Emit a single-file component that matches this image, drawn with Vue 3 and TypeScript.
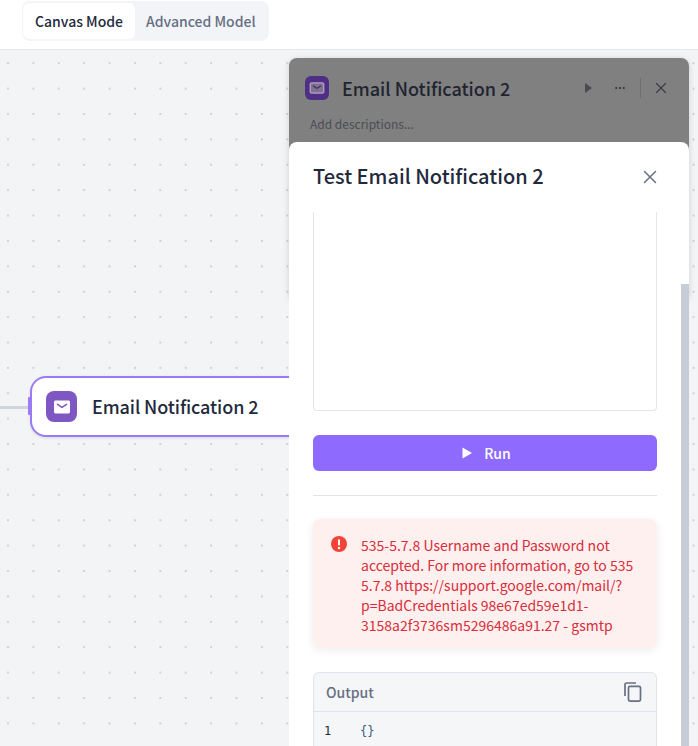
<script setup lang="ts">
const errorText = '535-5.7.8 Username and Password not accepted. For more information, go to 535 5.7.8 https://support.google.com/mail/?p=BadCredentials 98e67ed59e1d1-3158a2f3736sm5296486a91.27 - gsmtp'
</script>

<template>
  <div class="app">
    <header class="topbar">
      <div class="tabs">
        <button class="tab active">Canvas Mode</button>
        <button class="tab">Advanced Model</button>
      </div>
    </header>
    <main class="canvas">
      <div class="edge"></div>
      <div class="node">
        <span class="handle"></span>
        <span class="node-icon">
          <svg width="20" height="20" viewBox="0 0 20 20"><path fill="#fff" d="M3.6 3.6h12.8c.9 0 1.6.7 1.6 1.6v9.6c0 .9-.7 1.6-1.6 1.6H3.6c-.9 0-1.6-.7-1.6-1.6V5.200c0-.9.7-1.600 1.600-1.600z"/><path fill="none" stroke="#7e57c2" stroke-width="1.500" stroke-linecap="round" stroke-linejoin="round" d="M5.500 7.300 10 10.400l4.500-3.100"/></svg>
        </span>
        <span class="node-title">Email Notification 2</span>
      </div>

      <section class="panel">
        <div class="panel-head">
          <span class="panel-icon">
            <svg width="16" height="16" viewBox="0 0 20 20"><path fill="#807090" stroke="#c9bedd" stroke-width="1.200" d="M2.500 3.600h15c.6 0 1 .4 1 1v10.800c0 .6-.4 1-1 1h-15c-.6 0-1-.4-1-1V4.600c0-.6.4-1 1-1z"/><path fill="none" stroke="#3f2a66" stroke-width="1.500" stroke-linecap="round" d="M5.500 7.500 10 10.500l4.500-3"/></svg>
          </span>
          <span class="panel-title">Email Notification 2</span>
          <svg class="tool play" width="12" height="12" viewBox="0 0 12 12"><path fill="#4b4b4f" d="M3 1v10L10 6z"/></svg>
          <svg class="tool dots" width="14" height="14" viewBox="0 0 14 14"><g fill="#333438"><circle cx="3.200" cy="7" r="1.100"/><circle cx="7" cy="7" r="1.100"/><circle cx="10.800" cy="7" r="1.100"/></g></svg>
          <span class="sep"></span>
          <svg class="tool" width="12" height="12" viewBox="0 0 12 12"><path stroke="#3d3e42" stroke-width="1.200" stroke-linecap="round" d="M1.500 1.500l9 9m0-9l-9 9"/></svg>
        </div>
        <div class="panel-desc">Add descriptions...</div>
      </section>

      <section class="test">
        <div class="test-head">
          <h2>Test Email Notification 2</h2>
          <svg width="14" height="14" viewBox="0 0 14 14"><path stroke="#676f83" stroke-width="1.500" stroke-linecap="round" d="M1.500 1.500l11 11m0-11l-11 11"/></svg>
        </div>
        <div class="test-body">
          <div class="form-box"></div>
          <button class="run">
            <svg width="12" height="12" viewBox="0 0 12 12"><path fill="#fff" d="M1.500.5v11L11 6z"/></svg>
            <span>Run</span>
          </button>
          <div class="rule"></div>
          <div class="error">
            <svg class="err-icon" width="18" height="18" viewBox="0 0 18 18"><circle cx="9" cy="9" r="8" fill="#f04438"/><rect x="8" y="4.200" width="2" height="6.400" rx="1" fill="#fff"/><circle cx="9" cy="13" r="1.200" fill="#fff"/></svg>
            <p>{{ errorText }}</p>
          </div>
          <div class="output">
            <div class="output-head">
              <span>Output</span>
              <svg width="18" height="20" viewBox="0 0 18 20" fill="none" stroke="#676f83" stroke-width="1.700"><path d="M1 14V2.500C1 1.700 1.700 1 2.500 1H12"/><rect x="4.500" y="4.300" width="12" height="14.800" rx="1.500"/></svg>
            </div>
            <div class="code"><span class="ln">1</span><span class="br">{}</span></div>
          </div>
        </div>
        <div class="scrollbar"></div>
      </section>
    </main>
  </div>
</template>

<style>
html, body { margin: 0; background: #f2f4f7; }
</style>

<style scoped>
.app {
  width: 698px;
  height: 746px;
  display: flex;
  flex-direction: column;
  overflow: hidden;
  font-family: "Noto Sans CJK SC", "Noto Sans", sans-serif;
  color: #1f2a3d;
}
.topbar {
  height: 48px;
  flex: none;
  background: #fff;
  border-bottom: 1px solid #e5e7eb;
  padding: 1px 0 0 22px;
  box-sizing: content-box;
}
.tabs {
  display: inline-flex;
  height: 36px;
  width: 247px;
  box-sizing: content-box;
  padding: 2px 0;
  background: #f2f4f7;
  border-radius: 8px;
}
.tab {
  border: 0;
  background: none;
  font: inherit;
  font-size: 14px;
  font-weight: 500;
  color: #676f83;
  padding: 0 11px;
  margin: 0;
  border-radius: 6px;
  white-space: nowrap;
}
.tab.active {
  margin-left: 1px;
  background: #fff;
  color: #1f2a3d;
  padding: 0 12px;
}
.canvas {
  position: relative;
  flex: 1;
  min-height: 0;
  background-color: #f3f4f6;
  background-image: radial-gradient(circle, #c4c7ce 0.6px, transparent 1px);
  background-size: 25.4px 25.400px;
  background-position: -4.700px .5px;
}
.edge {
  position: absolute;
  left: 0;
  top: 356px;
  width: 30px;
  height: 3px;
  background: #d0d5dc;
}
.node {
  position: absolute;
  left: 30px;
  top: 326px;
  width: 300px;
  height: 61px;
  box-sizing: border-box;
  display: flex;
  align-items: center;
  gap: 15px;
  padding-left: 14px;
  background: #fff;
  border: 2px solid #9b7bf5;
  border-radius: 16px;
  box-shadow: 0 1px 3px rgba(16,24,40,.12);
}
.handle {
  position: absolute;
  left: -4px;
  top: 19px;
  width: 2px;
  height: 18px;
  border-radius: 1px 0 0 1px;
  background: #9b7bf5;
}
.node-icon {
  width: 31px;
  height: 31px;
  border-radius: 8px;
  background: #7e57c2;
  display: flex;
  align-items: center;
  justify-content: center;
}
.node-title {
  font-size: 18px;
  font-weight: 500;
  letter-spacing: -.1px;
  margin-bottom: 1px;
}
.panel {
  position: absolute;
  left: 289px;
  top: 8px;
  width: 400px;
  height: 240px;
  background: #808080;
  border-radius: 8px 8px 0 0;
  box-shadow: 0 1px 6px rgba(0,0,0,.15);
}
.panel-head {
  display: flex;
  align-items: center;
  height: 30px;
  padding: 15px 22px 0 16px;
}
.panel-icon {
  width: 24px;
  height: 24px;
  border-radius: 6px;
  background: #4f2f85;
  display: flex;
  align-items: center;
  justify-content: center;
}
.panel-title {
  margin-left: 13px;
  flex: 1;
  font-size: 18px;
  font-weight: 500;
  color: #1f2430;
}
.tool { flex: none; }
.dots { margin-left: 19px; }
.sep {
  width: 1px;
  height: 20px;
  margin: 0 14px 0 13px;
  background: #6f6f6f;
}
.panel-desc {
  margin: 12px 0 0 21px;
  font-size: 12px;
  line-height: 18px;
  color: #4a4d55;
}
.test {
  position: absolute;
  left: 289px;
  top: 92px;
  width: 400px;
  height: 604px;
  background: #fff;
  border-radius: 8px 8px 0 0;
  overflow: hidden;
}
.test-head {
  height: 66px;
  padding: 0 32px 4px 24px;
  display: flex;
  align-items: center;
  justify-content: space-between;
}
.test-head svg { margin-top: 4px; }
.test-head h2 {
  margin: 0;
  font-size: 20px;
  font-weight: 500;
  color: #1f2a3d;
}
.test-body {
  padding: 0 32px 0 24px;
}
.form-box {
  height: 198px;
  border: 1px solid #e4e6ea;
  border-top: 0;
  border-radius: 0 0 4px 4px;
}
.run {
  width: 344px;
  height: 36px;
  margin-top: 24px;
  border: 0;
  border-radius: 6px;
  background: #8f6aff;
  color: #fff;
  font: inherit;
  font-size: 14px;
  font-weight: 500;
  display: flex;
  align-items: center;
  justify-content: center;
  gap: 11px;
  padding-left: 8px;
}
.rule {
  height: 1px;
  margin-top: 24px;
  background: #e3e4e8;
}
.error {
  margin-top: 23px;
  height: 129px;
  box-sizing: border-box;
  padding: 16px 18px 0 17px;
  display: flex;
  gap: 13px;
  background: #fef0ef;
  border-radius: 8px;
  box-shadow: 0 2px 8px rgba(16,24,40,.08);
}
.err-icon { flex: none; }
.error p {
  margin: 0;
  font-size: 14px;
  line-height: 20px;
  color: #d92d3a;
}
.output {
  margin-top: 24px;
  border: 1px solid #e1e4ea;
  border-radius: 6px;
  background: #f5f6f8;
}
.output-head {
  height: 38px;
  padding: 0 14px 0 12px;
  display: flex;
  align-items: center;
  justify-content: space-between;
  border-bottom: 1px solid #e1e4ea;
  font-size: 14px;
  font-weight: 500;
  color: #676f83;
}
.code {
  height: 100px;
  padding-top: 10px;
  display: flex;
  font-family: "DejaVu Sans Mono", monospace;
  font-size: 12px;
  line-height: 18px;
}
.ln { width: 46px; padding-left: 10px; box-sizing: border-box; color: #1f2a3d; }
.br { color: #35607a; }
.scrollbar {
  position: absolute;
  right: 0;
  top: 142px;
  width: 8px;
  height: 470px;
  background: #c8ccd6;
}
</style>
